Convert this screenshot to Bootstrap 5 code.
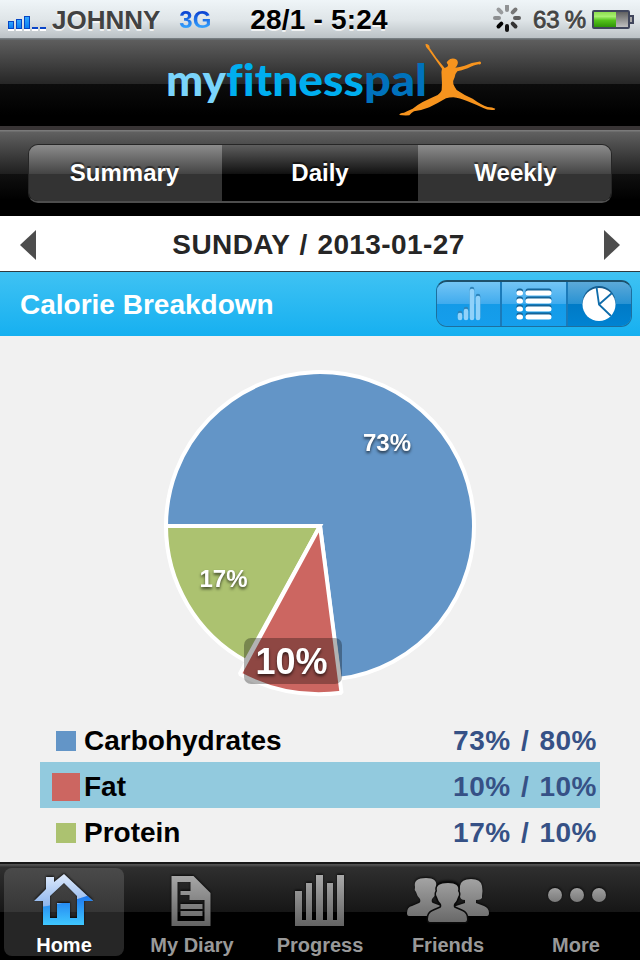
<!DOCTYPE html>
<html lang="en">

<head>
    <meta charset="UTF-8">
    <meta name="viewport" content="width=device-width, initial-scale=1.0">
    <title>myfitnesspal</title>
    <!-- Bootstrap CSS -->
    <link href="https://cdn.jsdelivr.net/npm/bootstrap@5.3.3/dist/css/bootstrap.min.css" rel="stylesheet" />
    <style>
        body {
            width: 640px;
            height: 960px;
            overflow: hidden;
            background: #f1f1f1;
            font-family: "Liberation Sans", Arial, sans-serif;
            font-weight: bold;
            line-height: 1;
            white-space: nowrap;
        }

        svg {
            display: block;
            flex: none;
        }

        /* status bar */
        .status-bar {
            height: 40px;
            padding: 0 6px 2px 8px;
            background: linear-gradient(#eff5f8, #dfe5e8 50%, #bbc2c6 38px, #7d8589 38px, #5f6466 40px);
            text-shadow: 0 2px 0 rgba(255, 255, 255, .75);
        }

        .status-side {
            flex: 1 1 0;
        }

        .carrier {
            margin-left: 6px;
            padding-top: 2px;
            font-size: 26px;
            color: #424242;
        }

        .net-type {
            margin-left: 19px;
            padding-top: 2px;
            font-size: 24px;
            background: linear-gradient(#0a3fd0 20%, #35a5ff 85%);
            -webkit-background-clip: text;
            color: transparent;
            text-shadow: none;
        }

        .clock {
            padding: 2px 4px 0 0;
            font-size: 28px;
            letter-spacing: .2px;
            color: #000;
        }

        .charge {
            margin: 0 6px 0 12px;
            padding-top: 2px;
            font-size: 24px;
            font-weight: normal;
            -webkit-text-stroke: .8px #444;
            color: #444;
        }

        .charge span {
            margin-left: 5px;
        }

        /* logo */
        .brand-bar {
            height: 90px;
            background: linear-gradient(#5e5e5e, #262626 44px, #0c0c0c 44px, #000 75px, #000 86px, #383435 86px);
        }

        .brand-bar text {
            font-family: Lato, sans-serif;
            font-weight: 900;
            font-size: 44px;
            font-variant-ligatures: none;
        }

        /* Summary / Daily / Weekly */
        .period-bar {
            height: 86px;
            padding: 14px 28px 13px;
            background: linear-gradient(#7a7a7a 0, #7a7a7a 1px, #606060 2px, #1f1f1f 44px, #101010 44px, #000 70px);
        }

        .period-group {
            border-radius: 10px;
            border: 1px solid #262626;
            border-bottom: 2px solid #4d4d4d;
            overflow: hidden;
        }

        .period-group button {
            border: 0;
            padding: 0 2px 0 0;
            color: #fff;
            font-size: 24px;
            font-weight: bold;
            text-shadow: 0 -2px 1px rgba(0, 0, 0, .5);
            background: linear-gradient(#8c8c8c, #444 29px, #333 29px, #333);
        }

        .period-group button.current {
            flex: 0 0 196px;
            padding: 0;
            background: linear-gradient(#5e5e5e, #101010 29px, #000 29px, #000);
        }

        .period-group button:last-child {
            padding: 0 0 0 2px;
        }

        /* date */
        .date-bar {
            height: 56px;
            padding: 2px 20px 0;
            border-bottom: 1px solid #2e3a40;
            background: #fff;
            font-size: 28px;
            color: #262626;
        }

        .date-bar span {
            margin-right: 3px;
            letter-spacing: .4px;
            word-spacing: 1.5px;
        }

        /* section title */
        .section-bar {
            height: 64px;
            padding: 0 8px 0 20px;
            background: linear-gradient(#3fc2f3, #16b0f0);
            color: #fff;
            font-size: 28px;
        }

        .section-bar > span {
            padding-top: 2px;
        }

        .view-group {
            width: 196px;
            height: 47px;
            margin-top: -1px;
            border: 1px solid #1d6f9e;
            border-top: 2px solid #1e506b;
            border-radius: 11px;
            overflow: hidden;
        }

        .view-group button {
            flex: 1 1 0;
            border: 0;
            padding: 0;
            background: linear-gradient(#74c5f5, #3fabee 50%, #149be8 50%, #159eec);
        }

        .view-group button + button {
            border-left: 2px solid #1b7ab9;
        }

        .view-group button.current {
            background: linear-gradient(#5ca9d8, #2892d3 50%, #007ac6 50%, #0083d2);
        }

        /* chart */
        .chart-area {
            height: 380px;
        }

        .chart-area text {
            fill: #fff;
            font-size: 24px;
            text-anchor: middle;
            filter: drop-shadow(0 2px 1.5px rgba(0, 0, 0, .65));
        }

        .chart-area text.picked {
            font-size: 36px;
        }

        /* legend */
        .legend-list {
            height: 146px;
            padding: 0 40px;
            font-size: 28px;
            color: #000;
        }

        .legend-row {
            height: 46px;
            padding: 4px 3px 0 12px;
        }

        .legend-row.picked {
            background: #92cade;
        }

        .swatch-cell {
            width: 28px;
            margin-right: 4px;
        }

        .swatch {
            width: 20px;
            height: 20px;
        }

        .picked .swatch {
            width: 28px;
            height: 28px;
            margin-top: -1px;
        }

        .carb-color { background: #6395c7; }
        .fat-color { background: #cc6661; }
        .protein-color { background: #acc270; }

        .legend-value {
            color: #365186;
            letter-spacing: .5px;
            word-spacing: 2px;
        }

        /* tab bar */
        .tab-bar {
            height: 98px;
            padding-top: 6px;
            background: linear-gradient(#181818 0, #181818 2px, #555 2px, #444 4px, #2f2f2f 5px, #161616 50px, #000 50px);
        }

        .tab-bar a {
            height: 88px;
            margin: 0 4px;
            border-radius: 8px;
            color: #999;
            font-size: 20px;
            text-decoration: none;
        }

        .tab-bar a.current {
            color: #fff;
            background: linear-gradient(#4a4a4a, #363636 44px, #262626 44px, #262626);
        }

        .tab-bar svg {
            margin-bottom: 3px;
            overflow: visible;
            filter: drop-shadow(0 -1px 1px rgba(0, 0, 0, .8));
        }
    </style>
</head>

<body>
    <!-- status bar -->
    <div class="status-bar d-flex align-items-center">
        <div class="status-side d-flex align-items-center">
            <svg width="38" height="38" viewBox="8 0 38 38">
                <defs>
                    <linearGradient id="sig" x1="0" y1="0" x2="0" y2="1">
                        <stop offset="0" stop-color="#35a9ff" />
                        <stop offset="1" stop-color="#087cf0" />
                    </linearGradient>
                </defs>
                <path d="M8 30h6M16 30h6M24 30h6M32 30h6M40 30h6" stroke="#fff" stroke-width="2" />
                <g fill="url(#sig)" stroke="#0645c4">
                    <rect x="8.500" y="21.500" width="5" height="7" />
                    <rect x="16.500" y="19.500" width="5" height="9" />
                    <rect x="24.500" y="16.500" width="5" height="12" />
                </g>
                <path d="M32 28h6M40 28h6" stroke="#0a46c8" stroke-width="2" />
            </svg>
            <span class="carrier">JOHNNY</span>
            <span class="net-type">3G</span>
        </div>
        <div class="clock">28/1 - 5:24</div>
        <div class="status-side d-flex align-items-center justify-content-end">
            <svg width="28" height="28" viewBox="-14 -13 28 28" stroke-width="4" stroke-linecap="round">
                <path d="M0 -12v4" stroke="#909294" />
                <path d="M0 -12v4" stroke="#777" transform="rotate(45)" />
                <path d="M0 -12v4" stroke="#5f5f5f" transform="rotate(90)" />
                <path d="M0 -12v4" stroke="#333" transform="rotate(135)" />
                <path d="M0 -12v4" stroke="#111" transform="rotate(180)" />
                <path d="M0 -12v4" stroke="#000" transform="rotate(225)" />
                <path d="M0 -12v4" stroke="#8c8e90" transform="rotate(270)" />
                <path d="M0 -12v4" stroke="#999b9d" transform="rotate(315)" />
            </svg>
            <div class="charge">63<span>%</span></div>
            <svg width="42" height="20" viewBox="0 -1 42 20">
                <defs>
                    <linearGradient id="juice" x1="0" y1="0" x2="0" y2="1">
                        <stop offset="0" stop-color="#8ede50" />
                        <stop offset=".3" stop-color="#a8f070" />
                        <stop offset=".55" stop-color="#55c41c" />
                        <stop offset="1" stop-color="#2f9408" />
                    </linearGradient>
                    <linearGradient id="shell" x1="0" y1="0" x2="0" y2="1">
                        <stop offset="0" stop-color="#5a5a5a" />
                        <stop offset="1" stop-color="#c6c6c6" />
                    </linearGradient>
                </defs>
                <rect x="1" y="1" width="36" height="17" rx="1" fill="url(#shell)" stroke="#40465c" stroke-width="2" />
                <rect x="2" y="2" width="22" height="15" fill="url(#juice)" />
                <path d="M38 6h3v7h-3" fill="#aaa" stroke="#40465c" stroke-width="2" />
            </svg>
        </div>
    </div>

    <!-- logo -->
    <div class="brand-bar">
        <svg width="640" height="86" viewBox="0 40 640 86">
            <text x="166" y="96" textLength="60" lengthAdjust="spacingAndGlyphs" fill="#7ad4fb">my</text>
            <text x="226" y="96" textLength="138" lengthAdjust="spacingAndGlyphs" fill="#00aeef">fitness</text>
            <text x="364" y="96" textLength="63" lengthAdjust="spacingAndGlyphs" fill="#0072bc">pal</text>
            <path fill="#f7941e" transform="translate(396 40) scale(.3333)" d="M88 13Q94 9 100 17L101 24Q120 55 146 84L154 80Q158 76 155 72 149 68 156 62 164 53 176 56 188 60 185 72 183 78 178 83 190 82 206 77 228 66 248 65 256 63 255 69 256 74 248 73 235 75 215 85 195 92 184 94 178 100 176 112 170 122 172 132 176 142 182 150 205 166 230 176 255 194 275 201 290 201 298 206 298 211 288 210 272 210 262 204 240 194 215 184 190 174 172 172 160 172 150 175 125 190 100 202 75 212 54 214 46 218 40 226 24 227 10 225 10 219 24 218 36 212 50 206 62 196 80 186 105 174 125 165 136 156 137 150 139 130 137 110 135 95 138 86 118 58 98 30 88 22 88 13z" />
        </svg>
    </div>

    <!-- period tabs -->
    <div class="period-bar">
        <div class="period-group d-flex h-100">
            <button class="flex-fill w-25">Summary</button>
            <button class="current">Daily</button>
            <button class="flex-fill w-25">Weekly</button>
        </div>
    </div>

    <!-- date -->
    <div class="date-bar d-flex align-items-center justify-content-between">
        <svg width="16" height="30"><path d="M0 15 16 0v30z" fill="#4d4d4d" /></svg>
        <span>SUNDAY / 2013-01-27</span>
        <svg width="16" height="30"><path d="M16 15 0 0v30z" fill="#4d4d4d" /></svg>
    </div>

    <div class="section-bar d-flex align-items-center justify-content-between">
        <span>Calorie Breakdown</span>
        <div class="view-group d-flex">
            <button>
                <svg class="mx-auto" width="26" height="36" stroke-linecap="round" stroke-width="4.600">
                    <path d="M4 27v4M10 23v8M16 3v28M22 10v21" stroke="#2e83b8" />
                    <path d="M4 29v3M10 25v7M16 5v27M22 12v20" stroke="#90d2fa" />
                </svg>
            </button>
            <button>
                <svg class="mx-auto" width="36" height="34" stroke-linecap="round" stroke-width="5">
                    <path d="M3 4h1.500M3 12h1.500M3 20h1.500M3 28h1.500M12 4h21M12 12h21M12 20h21M12 28h21" stroke="#14659a" />
                    <path d="M3 6h1.500M3 14h1.500M3 22h1.500M3 30h1.500M12 6h21M12 14h21M12 22h21M12 30h21" stroke="#fff" />
                </svg>
            </button>
            <button class="current">
                <svg class="mx-auto" width="34" height="36" viewBox="-17 -18 34 36">
                    <circle cy="-1.500" r="16.500" fill="#145c8e" />
                    <circle cy=".5" r="16.500" fill="#fff" />
                    <path d="M-2.500 -17 0 .5 12 12M0 .5 13 -11" fill="none" stroke="#0f6caa" stroke-width="1.800" />
                </svg>
            </button>
        </div>
    </div>

    <!-- pie, slices run clockwise from the left -->
    <div class="chart-area">
        <svg width="640" height="380" viewBox="0 336 640 380">
            <g stroke="#fff" stroke-width="4">
                <path d="M320 526H166A154 154 0 1 1 339.300 678.800z" fill="#6395c7" />
                <path d="M320 526 245.800 661A154 154 0 0 1 166 526z" fill="#acc270" />
                <path stroke-linejoin="bevel" d="M320 526 341.500 692.700A168.500 168.500 0 0 1 239.800 674z" fill="#cc6661" />
            </g>
            <rect x="244" y="638" width="98" height="46" rx="7" fill="#000" fill-opacity=".3" />
            <text x="387" y="451">73%</text>
            <text x="223.500" y="587">17%</text>
            <text class="picked" x="291.500" y="674">10%</text>
        </svg>
    </div>

    <!-- legend -->
    <div class="legend-list">
        <div class="legend-row d-flex align-items-center">
            <div class="swatch-cell d-flex justify-content-center">
                <div class="swatch carb-color"></div>
            </div>
            <span>Carbohydrates</span>
            <span class="legend-value ms-auto">73% / 80%</span>
        </div>
        <div class="legend-row picked d-flex align-items-center">
            <div class="swatch-cell d-flex justify-content-center">
                <div class="swatch fat-color"></div>
            </div>
            <span>Fat</span>
            <span class="legend-value ms-auto">10% / 10%</span>
        </div>
        <div class="legend-row d-flex align-items-center">
            <div class="swatch-cell d-flex justify-content-center">
                <div class="swatch protein-color"></div>
            </div>
            <span>Protein</span>
            <span class="legend-value ms-auto">17% / 10%</span>
        </div>
    </div>

    <!-- bottom tabs -->
    <nav class="tab-bar row row-cols-5 g-0">
        <div class="col">
            <a href="#" class="current d-flex flex-column align-items-center">
                <svg width="60" height="64" viewBox="34 868 60 64">
                    <defs>
                        <linearGradient id="houseTop" x1="0" y1="0" x2="0" y2="1">
                            <stop offset="0" stop-color="#dfeafb" />
                            <stop offset="1" stop-color="#5c96e6" />
                        </linearGradient>
                        <linearGradient id="houseLow" gradientUnits="userSpaceOnUse" x1="0" y1="896" x2="0" y2="925">
                            <stop offset="0" stop-color="#1f78ee" />
                            <stop offset="1" stop-color="#3fc8ff" />
                        </linearGradient>
                        <clipPath id="shine">
                            <path d="M30 908Q60 906 96 893V930H30z" />
                        </clipPath>
                        <path id="house" fill-rule="evenodd" d="M34 901 46 889V877h8v5L64 874 93 901H84v24H43V901zM50 896V918H57V903H70v15H77V896L64 883z" />
                    </defs>
                    <use href="#house" fill="url(#houseTop)" />
                    <use href="#house" fill="url(#houseLow)" clip-path="url(#shine)" />
                </svg>
                <span>Home</span>
            </a>
        </div>
        <div class="col">
            <a href="#" class="d-flex flex-column align-items-center">
                <svg width="40" height="64" viewBox="172.500 868 40 64">
                    <defs>
                        <linearGradient id="steel" gradientUnits="userSpaceOnUse" x1="0" y1="875" x2="0" y2="927">
                            <stop offset="0" stop-color="#a8a8a8" />
                            <stop offset="1" stop-color="#626262" />
                        </linearGradient>
                    </defs>
                    <path fill="url(#steel)" fill-rule="evenodd" d="M172 876h22l17 17v33h-39zM178 882v39h27v-21h-15v-5h-9v-4h10v-9zM181 904h22v5h-22zM181 911h22v5h-22z" />
                </svg>
                <span>My Diary</span>
            </a>
        </div>
        <div class="col">
            <a href="#" class="d-flex flex-column align-items-center">
                <svg width="50" height="64" viewBox="295 868 50 64">
                    <path fill="url(#steel)" d="M295 891h7v29h4v-37h6v37h4v-45h7v45h4v-37h6v37h4v-45h7v51h-49z" />
                </svg>
                <span>Progress</span>
            </a>
        </div>
        <div class="col">
            <a href="#" class="d-flex flex-column align-items-center">
                <svg width="84" height="64" viewBox="406 868 84 64">
                    <g fill="url(#steel)">
                        <path d="M409 916Q407 916 407 913 407 907 412 906L419 903Q421 902 420 899 417 896 416 892 414 890 415 887 413 878 426 878 438 878 436 887 438 889 436 893 435 896 432 899 431 902 433 903L441 906Q445 908 445 916z" />
                        <path d="M487 916Q489 916 489 913 489 908 484 906L476 903V900Q483 900 482 896 483 891 482 886 481 879 471 879 461 879 460 886 459 891 460 896 460 900 465 900V903L456 906Q451 908 451 916z" />
                        <path stroke="#0a0a0a" stroke-width="3" paint-order="stroke" d="M430 922Q428 922 428 919 428 913 433 911L440 908Q442 907 441 904 438 901 437 897 435 894 437 891 435 883 448 883 460 883 458 891 460 894 458 897 457 901 454 904 453 907 455 908L462 911Q467 913 467 919 467 922 465 922z" />
                    </g>
                </svg>
                <span>Friends</span>
            </a>
        </div>
        <div class="col">
            <a href="#" class="d-flex flex-column align-items-center">
                <svg width="60" height="64" viewBox="546 868 60 64">
                    <defs>
                        <linearGradient id="dot" x1="0" y1="0" x2="0" y2="1">
                            <stop offset="0" stop-color="#a0a0a0" />
                            <stop offset="1" stop-color="#7a7a7a" />
                        </linearGradient>
                    </defs>
                    <g fill="url(#dot)">
                        <circle cx="555" cy="895" r="7" />
                        <circle cx="577" cy="895" r="7" />
                        <circle cx="599" cy="895" r="7" />
                    </g>
                </svg>
                <span>More</span>
            </a>
        </div>
    </nav>

    <!-- Bootstrap JS -->
    <script src="https://cdn.jsdelivr.net/npm/bootstrap@5.3.3/dist/js/bootstrap.bundle.min.js"></script>
</body>

</html>
